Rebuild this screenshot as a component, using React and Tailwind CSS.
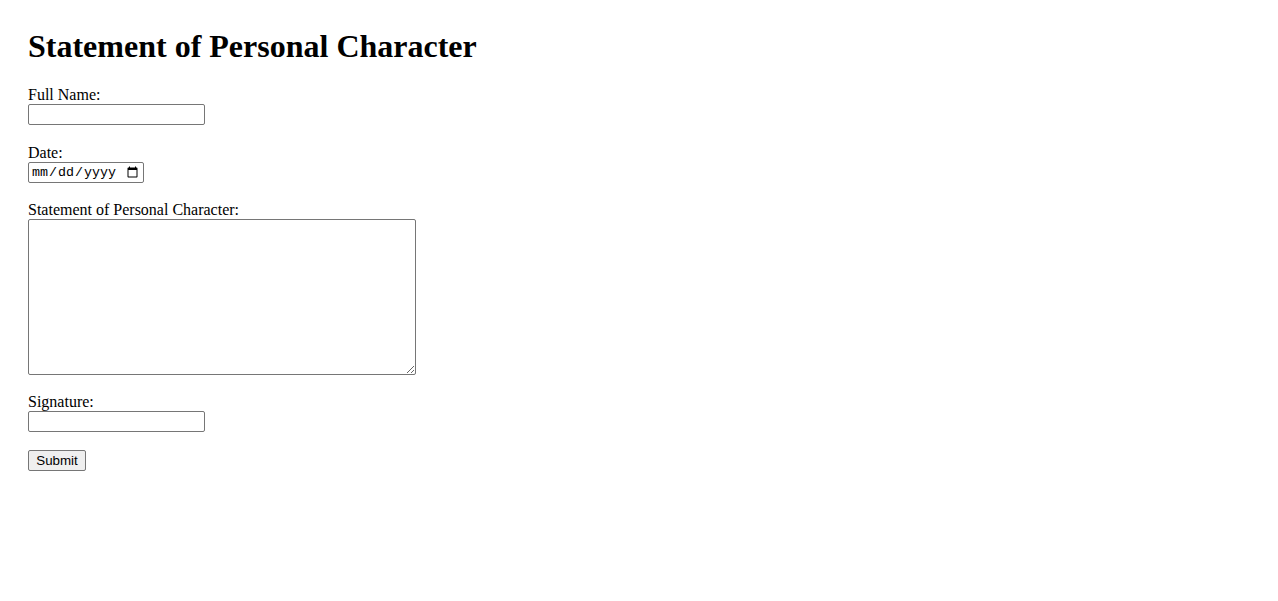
import React from "react";

const inputCls =
  "block w-[177px] h-[21px] border border-[#767676] rounded-[2px] px-[2px] py-[1px] bg-white text-black font-['Liberation_Sans',Arial,sans-serif] text-[13.333px] outline-none";

export default function App() {
  return (
    <div className="px-[28px] pt-[28px] font-['Liberation_Serif','Times_New_Roman',serif] text-[16px] text-black bg-white">
      <h1 className="text-[32px] font-bold leading-[normal] mb-[21px]">
        Statement of Personal Character
      </h1>
      <form onSubmit={(e) => e.preventDefault()}>
        <div className="mb-[19px]">
          <label htmlFor="fullName" className="block leading-[normal]">
            Full Name:
          </label>
          <input id="fullName" type="text" className={inputCls} />
        </div>
        <div className="mb-[18px]">
          <label htmlFor="date" className="block leading-[normal]">
            Date:
          </label>
          <input
            id="date"
            type="date"
            className="block w-[116px] h-[21px] border border-[#767676] rounded-[2px] px-[2px] py-[1px] bg-white text-black font-['Liberation_Mono','Courier_New',monospace] text-[13.333px] outline-none"
          />
        </div>
        <div className="mb-[18px]">
          <label htmlFor="statement" className="block leading-[normal]">
            Statement of Personal Character:
          </label>
          <textarea
            id="statement"
            className="block w-[388px] h-[156px] border border-[#767676] rounded-[2px] px-[2px] py-[2px] bg-white text-black font-['Liberation_Mono','Courier_New',monospace] text-[13.333px] resize outline-none"
          />
        </div>
        <div className="mb-[18px]">
          <label htmlFor="signature" className="block leading-[normal]">
            Signature:
          </label>
          <input id="signature" type="text" className={inputCls} />
        </div>
        <button
          type="submit"
          className="block w-[58px] h-[21px] border border-[#767676] rounded-[2px] bg-[#efefef] px-[6px] py-[1px] text-black font-['Liberation_Sans',Arial,sans-serif] text-[13.333px] leading-[normal]"
        >
          Submit
        </button>
      </form>
    </div>
  );
}
